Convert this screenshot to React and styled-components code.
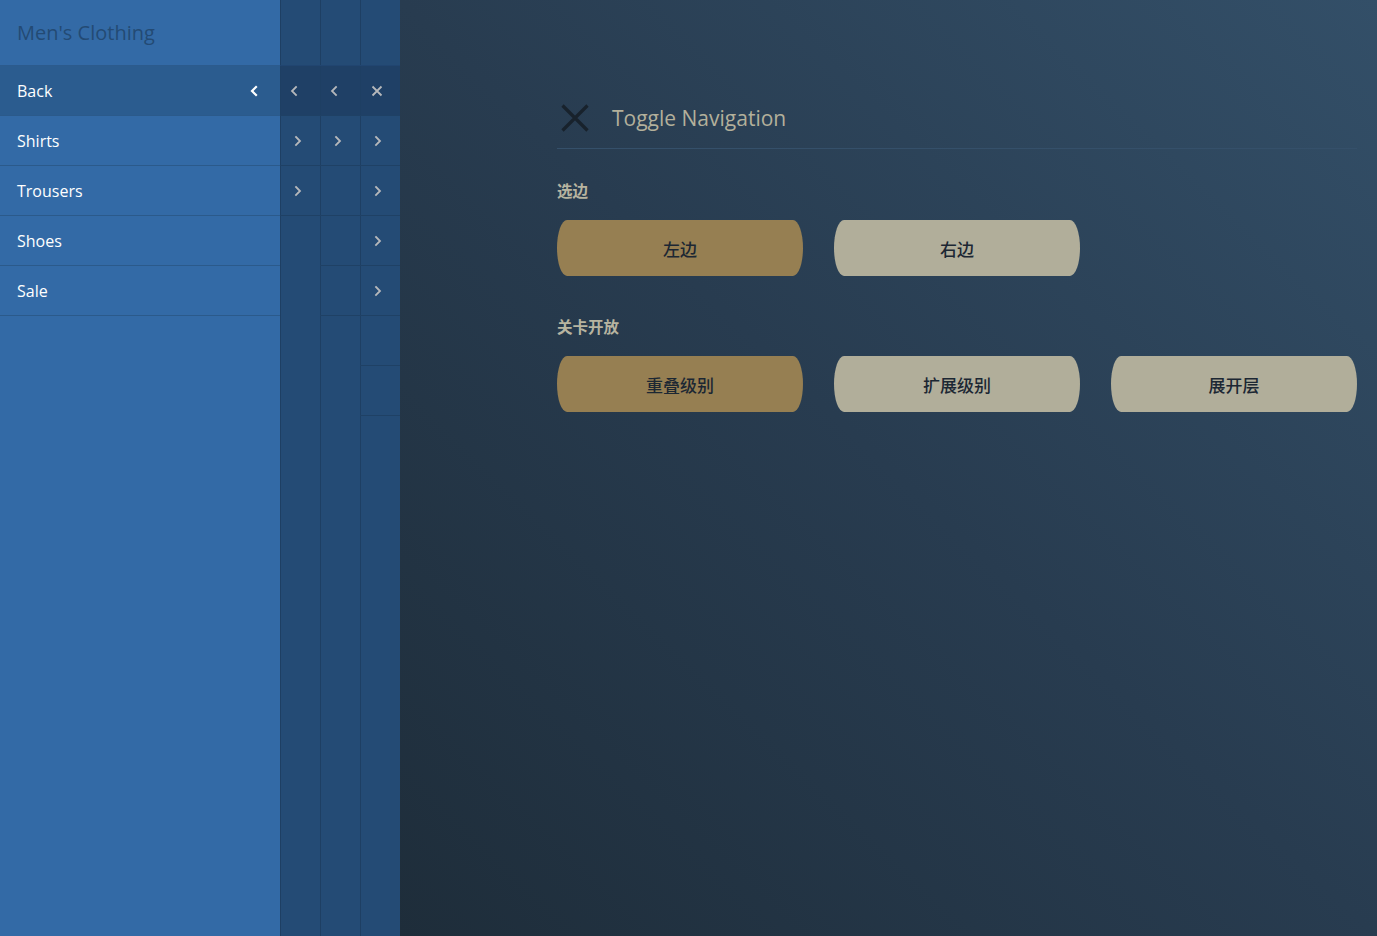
import React from "react";
import styled, { createGlobalStyle } from "styled-components";

const GlobalStyle = createGlobalStyle`
  html, body {
    margin: 0;
    padding: 0;
    height: 100%;
  }
  body {
    font-family: "Open Sans", "Noto Sans", "Noto Sans CJK SC", sans-serif;
    overflow: hidden;
  }
`;

const Page = styled.div`
  display: flex;
  width: 100%;
  height: 100vh;
`;

const MenuPanel = styled.nav`
  width: 280px;
  flex-shrink: 0;
  background-color: #336aa6;
  display: flex;
  flex-direction: column;
`;

const MenuTitle = styled.h2`
  margin: 0;
  height: 66px;
  box-sizing: border-box;
  padding: 0 17px 1px;
  display: flex;
  align-items: center;
  font-family: "Open Sans", "Noto Sans", sans-serif;
  font-weight: 400;
  font-size: 20px;
  color: #234a74;
  border-bottom: 1px solid #2c5b8d;
`;

const MenuItem = styled.a`
  height: 50px;
  box-sizing: border-box;
  display: flex;
  align-items: center;
  justify-content: space-between;
  padding: 0 22px 0 17px;
  color: #ffffff;
  font-size: 16px;
  text-decoration: none;
  border-bottom: 1px solid #2b5a8b;
  background-color: ${(p) => (p.back ? "#2b5c8f" : "transparent")};
  cursor: pointer;
`;

const Strip = styled.div`
  width: 40px;
  flex-shrink: 0;
  background-color: #244b75;
  box-shadow: inset 1px 0 0 #1e3f63;
  display: flex;
  flex-direction: column;
`;

const StripHead = styled.div`
  height: 66px;
  box-sizing: border-box;
  border-bottom: 1px solid #214570;
`;

const StripCell = styled.div`
  height: 50px;
  box-sizing: border-box;
  display: flex;
  align-items: center;
  padding-left: ${(p) => p.inset}px;
  border-bottom: 1px solid #1f4165;
  background-color: ${(p) => (p.back ? "#1f4066" : "transparent")};
  box-shadow: inset 1px 0 0 #1e3f63;
`;

const Main = styled.main`
  flex: 1;
  background: linear-gradient(to top right, #1e2d3a 0%, #283c50 50%, #334f68 100%);
  padding: 104px 21px 0 157px;
  box-sizing: border-box;
`;

const Content = styled.div`
  width: 800px;
`;

const Header = styled.div`
  display: flex;
  align-items: center;
  gap: 23px;
  height: 28px;
  padding: 0 0 16px 4px;
  border-bottom: 1px solid #35506a;
`;

const HeaderTitle = styled.h1`
  margin: 0;
  font-family: "Open Sans", "Noto Sans", sans-serif;
  font-weight: 400;
  font-size: 21px;
  color: #b3b09b;
`;

const SectionLabel = styled.div`
  margin-top: ${(p) => p.gap}px;
  height: 18px;
  line-height: 18px;
  font-family: "Noto Sans CJK SC", sans-serif;
  font-size: 15.5px;
  font-weight: 700;
  color: #b7b4a0;
`;

const ButtonRow = styled.div`
  margin-top: 21px;
  display: grid;
  grid-template-columns: repeat(3, 246px);
  column-gap: 31px;
`;

const PillButton = styled.button`
  height: 56px;
  border: none;
  border-radius: 10px / 28px;
  background-color: ${(p) => (p.active ? "#967f52" : "#b1ae9a")};
  color: #1c2733;
  font-family: "Noto Sans CJK SC", sans-serif;
  font-size: 17px;
  font-weight: 500;
  cursor: pointer;
`;

const Chevron = ({ dir = "right", color = "#b6b8bb", weight = 1.8 }) => (
  <svg width="8" height="12" viewBox="0 0 8 12" fill="none">
    <polyline
      points={dir === "right" ? "2,2 6,6 2,10" : "6,2 2,6 6,10"}
      stroke={color}
      strokeWidth={weight}
      strokeLinecap="square"
      strokeLinejoin="miter"
    />
  </svg>
);

const SmallClose = () => (
  <svg width="12" height="12" viewBox="0 0 12 12" fill="none">
    <path d="M1.5 1.5 L10.5 10.5 M10.5 1.5 L1.5 10.5" stroke="#b6b8bb" strokeWidth="1.8" />
  </svg>
);

const BigClose = () => (
  <svg width="28" height="28" viewBox="0 0 28 28" fill="none">
    <path d="M1.5 1.5 L26.5 26.5 M26.5 1.5 L1.5 26.5" stroke="#18222c" strokeWidth="3.2" />
  </svg>
);

const items = ["Shirts", "Trousers", "Shoes", "Sale"];

const strips = [
  ["back", "right", "right"],
  ["back", "right", null, null, null],
  ["close", "right", "right", "right", "right", null, null],
];

const insets = { back: 10, right: 14, close: 11 };

function StripColumn({ cells }) {
  return (
    <Strip>
      <StripHead />
      {cells.map((c, i) => (
        <StripCell key={i} back={i === 0} inset={insets[c] || 0}>
          {c === "back" && <Chevron dir="left" />}
          {c === "right" && <Chevron dir="right" />}
          {c === "close" && <SmallClose />}
        </StripCell>
      ))}
    </Strip>
  );
}

export default function App() {
  return (
    <>
      <GlobalStyle />
      <Page>
        <MenuPanel>
          <MenuTitle>Men's Clothing</MenuTitle>
          <MenuItem back>
            Back
            <Chevron dir="left" color="#ffffff" weight={2.2} />
          </MenuItem>
          {items.map((item) => (
            <MenuItem key={item}>{item}</MenuItem>
          ))}
        </MenuPanel>
        {strips.map((cells, i) => (
          <StripColumn key={i} cells={cells} />
        ))}
        <Main>
          <Content>
            <Header>
              <BigClose />
              <HeaderTitle>Toggle Navigation</HeaderTitle>
            </Header>
            <SectionLabel gap={32}>选边</SectionLabel>
            <ButtonRow>
              <PillButton active>左边</PillButton>
              <PillButton>右边</PillButton>
            </ButtonRow>
            <SectionLabel gap={41}>关卡开放</SectionLabel>
            <ButtonRow>
              <PillButton active>重叠级别</PillButton>
              <PillButton>扩展级别</PillButton>
              <PillButton>展开层</PillButton>
            </ButtonRow>
          </Content>
        </Main>
      </Page>
    </>
  );
}
